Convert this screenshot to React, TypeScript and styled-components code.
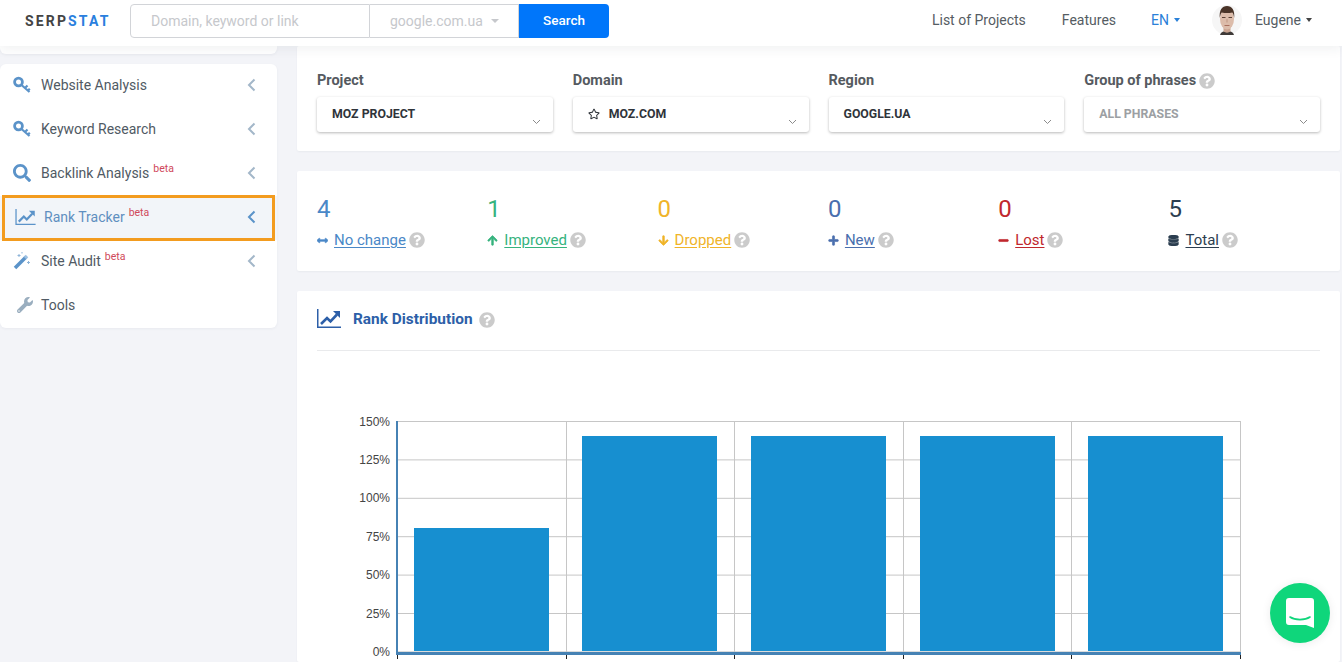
import React from "react";
import styled, { createGlobalStyle } from "styled-components";
import {
  FaArrowDown,
  FaArrowUp,
  FaArrowsAltH,
  FaDatabase,
  FaMinus,
  FaPlus,
  FaQuestionCircle,
  FaRegStar,
  FaSearch,
  FaWrench,
} from "react-icons/fa";

const GlobalStyle = createGlobalStyle`
  html, body {
    margin: 0;
    height: 100%;
    overflow: hidden;
    background: #f3f4f8;
    font-family: Roboto, "Liberation Sans", sans-serif;
  }
  * { box-sizing: border-box; }
`;

const Page = styled.div`
  width: 1342px;
  height: 662px;
  overflow: hidden;
  display: flex;
  flex-direction: column;
`;

const Header = styled.header`
  position: relative;
  z-index: 2;
  flex: none;
  height: 46px;
  padding: 0 29px 4px 25px;
  display: flex;
  align-items: center;
  background: #fff;
  box-shadow: 0 2px 12px rgba(40, 50, 70, 0.08);
`;

const Logo = styled.div`
  width: 105px;
  font-size: 14px;
  font-weight: 700;
  letter-spacing: 2.15px;
  color: #444;

  span {
    color: #2a7fde;
  }
`;

const SearchBox = styled.div`
  display: flex;
  height: 34px;
`;

const SearchInput = styled.div`
  width: 240px;
  padding-left: 20px;
  display: flex;
  align-items: center;
  font-size: 14px;
  color: #c6c8cc;
  border: 1px solid #d2d4d8;
  border-radius: 4px 0 0 4px;
`;

const SearchRegion = styled.div`
  width: 149px;
  padding-left: 20px;
  display: flex;
  align-items: center;
  gap: 8px;
  font-size: 14px;
  color: #c6c8cc;
  border: 1px solid #d2d4d8;
  border-left: 0;
`;

const Caret = styled.i<{ $color: string; $size?: number }>`
  display: inline-block;
  width: 0;
  height: 0;
  border-left: ${(p) => p.$size ?? 3.5}px solid transparent;
  border-right: ${(p) => p.$size ?? 3.5}px solid transparent;
  border-top: 4px solid ${(p) => p.$color};
`;

const SearchButton = styled.div`
  width: 90px;
  padding-bottom: 3px;
  display: flex;
  align-items: center;
  justify-content: center;
  font-size: 13.5px;
  font-weight: 500;
  color: #fff;
  background: #0076fa;
  border-radius: 0 4px 4px 0;
`;

const HeaderNav = styled.nav`
  margin-left: auto;
  padding-bottom: 2px;
  display: flex;
  align-items: center;
  font-size: 14px;
  color: #555c63;
`;

const NavLink = styled.span`
  margin-right: 36px;
`;

const Lang = styled.span`
  margin-right: 32px;
  margin-left: -1px;
  display: flex;
  align-items: center;
  gap: 5px;
  color: #2a80d8;
`;

const User = styled.span`
  display: flex;
  align-items: center;
  gap: 13px;
  margin-right: 1px;
`;

const UserName = styled.span`
  display: flex;
  align-items: center;
  gap: 5px;
`;

const Body = styled.div`
  flex: 1;
  min-height: 0;
  display: flex;
  gap: 20px;
`;

const Sidebar = styled.aside`
  flex: none;
  width: 277px;
  display: flex;
  flex-direction: column;
  gap: 10px;
`;

const SideStub = styled.div`
  height: 8px;
  background: #fff;
  border-radius: 0 0 6px 6px;
  box-shadow: 0 1px 3px rgba(40, 50, 70, 0.05);
`;

const SideCard = styled.div`
  background: #fff;
  border-radius: 6px;
  box-shadow: 0 1px 3px rgba(40, 50, 70, 0.05);
`;

const SideItem = styled.div<{ $active?: boolean }>`
  position: relative;
  height: 44px;
  padding: 0 21px 2px ${(p) => (p.$active ? 15 : 13)}px;
  display: flex;
  align-items: center;
  font-size: 14px;
  color: ${(p) => (p.$active ? "#5f8fc0" : "#505a64")};
  background: ${(p) => (p.$active ? "#f2f5f9" : "transparent")};

  ${(p) =>
    p.$active &&
    `&::after {
      content: "";
      position: absolute;
      inset: -1px 2px -1px 2px;
      border: 3px solid #f39c1f;
    }`}
`;

const SideIcon = styled.span<{ $active?: boolean; $muted?: boolean }>`
  flex: none;
  width: ${(p) => (p.$active ? 29 : 28)}px;
  padding-left: ${(p) => (p.$muted ? 4 : 0)}px;
  display: flex;
  align-items: center;
  color: ${(p) => (p.$muted ? "#9aaebf" : "#5b93c9")};
`;

const Beta = styled.sup`
  margin-left: 4px;
  margin-top: -7px;
  font-size: 10.5px;
  line-height: 1;
  color: #d0485a;
`;

const Chevron = styled.svg<{ $active?: boolean }>`
  margin-left: auto;
  color: ${(p) => (p.$active ? "#5b93c9" : "#a3b7c9")};
`;

const Main = styled.main`
  width: 1043px;
  display: flex;
  flex-direction: column;
  gap: 20px;
`;

const Card = styled.section`
  background: #fff;
  border-radius: 2px;
  box-shadow: 0 1px 2px rgba(40, 50, 70, 0.05);
`;

const FilterCard = styled(Card)`
  height: 105px;
  padding: 25px 20px 0;
  display: grid;
  grid-template-columns: repeat(4, 1fr);
  column-gap: 20px;
`;

const FilterLabel = styled.div`
  height: 26px;
  padding-top: 1px;
  display: flex;
  align-items: flex-start;
  gap: 3px;
  font-size: 14.5px;
  font-weight: 700;
  line-height: 18px;
  color: #555a60;

  svg {
    margin-top: 1px;
  }
`;

const HelpIcon = styled(FaQuestionCircle)<{ $size?: number }>`
  flex: none;
  width: ${(p) => p.$size ?? 16}px;
  height: ${(p) => p.$size ?? 16}px;
  color: #cbcbcb;
`;

const Select = styled.div<{ $muted?: boolean }>`
  position: relative;
  height: 35px;
  padding: 0 15px 1px;
  display: flex;
  align-items: center;
  gap: 9px;
  font-size: 12.3px;
  font-weight: 700;
  color: ${(p) => (p.$muted ? "#9c9fa3" : "#2f343a")};
  background: #fff;
  border-radius: 3px;
  box-shadow: 0 1px 3px rgba(0, 0, 0, 0.28);
`;

const SelectArrow = styled.svg`
  position: absolute;
  right: 12px;
  bottom: 7px;
  width: 9px;
  height: 6px;
`;

const StatsCard = styled(Card)`
  height: 100px;
  padding: 24px 0 0 20px;
  display: grid;
  grid-template-columns: repeat(6, 170.3px);
`;

const StatValue = styled.div<{ $color: string }>`
  height: 30px;
  font-size: 24px;
  line-height: 28px;
  color: ${(p) => p.$color};
`;

const StatLabel = styled.div<{ $color: string }>`
  margin-top: 6px;
  display: flex;
  align-items: center;
  font-size: 15px;
  color: ${(p) => p.$color};

  svg:first-child {
    width: 11px;
    height: 11px;
    margin-right: 6px;
    stroke: currentColor;
    stroke-width: 30;
  }

  u {
    margin-right: 3px;
    text-underline-offset: 2px;
  }
`;

const ChartCard = styled(Card)`
  flex: 1;
  min-height: 0;
  padding: 0 20px;
  overflow: hidden;
`;

const ChartTitle = styled.div`
  height: 60px;
  padding-bottom: 4px;
  display: flex;
  align-items: center;
  border-bottom: 1px solid #e9eaec;
  font-size: 15.4px;
  font-weight: 700;
  color: #2d5fa8;

  & > svg:first-child {
    margin-right: 12px;
  }

  & > svg:last-child {
    margin-top: 3px;
  }

  span {
    margin-right: 6px;
  }
`;

const ChartWrap = styled.div`
  margin-top: 60px;
`;

const ChatButton = styled.div`
  position: fixed;
  left: 1270px;
  top: 583px;
  width: 60px;
  height: 60px;
  display: flex;
  align-items: center;
  justify-content: center;
  border-radius: 50%;
  background: #0fd67b;
  box-shadow: 0 1px 10px rgba(0, 0, 0, 0.08);
`;

const Help = ({ size }: { size?: number }) => <HelpIcon $size={size} />;

const KeyIcon = () => (
  <svg width="18" height="18" viewBox="0 0 18 18">
    <circle cx="5.500" cy="6" r="3.900" fill="none" stroke="currentColor" strokeWidth="2.800" />
    <path
      d="M8.500 9l8 7M12 12l2.500-2.500M15 14.500l1.800-1.800"
      fill="none"
      stroke="currentColor"
      strokeWidth="2.200"
    />
  </svg>
);

const TrendIcon = ({ width, height }: { width: number; height: number }) => (
  <svg width={width} height={height} viewBox="0 0 24 19">
    <path d="M.75 0v18.250H24" fill="none" stroke="currentColor" strokeWidth="1.500" />
    <path d="M4 15l6-6 3.500 3.500L20 5.500" fill="none" stroke="currentColor" strokeWidth="2.600" />
    <path d="M16 2h7v7z" fill="currentColor" />
  </svg>
);

const WandIcon = () => (
  <svg width="18" height="18" viewBox="0 0 18 18">
    <path d="M2 16L13 5" stroke="currentColor" strokeWidth="3.600" />
    <path d="M12 6l2-2" stroke="#9cc0e2" strokeWidth="3.600" />
    <path
      d="M6 2v3M4.500 3.500h3M15.500 9v3M14 10.500h3M9 0v1.500"
      stroke="#8fb5d9"
      strokeWidth="1"
    />
  </svg>
);

const sideItems = [
  { title: "Website Analysis", icon: <KeyIcon />, arrow: true },
  { title: "Keyword Research", icon: <KeyIcon />, arrow: true },
  { title: "Backlink Analysis", icon: <FaSearch size={18} />, beta: true, arrow: true },
  { title: "Rank Tracker", icon: <TrendIcon width={21} height={16} />, beta: true, arrow: true, active: true },
  { title: "Site Audit", icon: <WandIcon />, beta: true, arrow: true },
  { title: "Tools", icon: <FaWrench size={16} />, muted: true },
];

const filters = [
  { label: "Project", value: "MOZ PROJECT" },
  { label: "Domain", value: "MOZ.COM", star: true },
  { label: "Region", value: "GOOGLE.UA" },
  { label: "Group of phrases", value: "ALL PHRASES", help: true, muted: true },
];

const stats = [
  { value: 4, label: "No change", color: "#4a88c7", icon: <FaArrowsAltH /> },
  { value: 1, label: "Improved", color: "#36b37e", icon: <FaArrowUp /> },
  { value: 0, label: "Dropped", color: "#f0b429", icon: <FaArrowDown /> },
  { value: 0, label: "New", color: "#4a6fae", icon: <FaPlus /> },
  { value: 0, label: "Lost", color: "#c0272d", icon: <FaMinus /> },
  { value: 5, label: "Total", color: "#2c3e50", icon: <FaDatabase /> },
];

const yTicks = ["150%", "125%", "100%", "75%", "50%", "25%", "0%"];
const xLines = [80, 249, 417, 586, 754, 923];
const bars = [
  { x: 97, top: 117 },
  { x: 265, top: 25 },
  { x: 434, top: 25 },
  { x: 603, top: 25 },
  { x: 771, top: 25 },
];

// top gridline sits 10px below the svg's top so the 150% label has room
const RankChart = () => (
  <svg width="1003" height="262" viewBox="0 0 1003 262" style={{ display: "block" }}>
    {yTicks.map((t, i) => {
      const y = 10.5 + i * 38.4;
      return (
        <g key={t}>
          <line x1="80" x2="923" y1={y} y2={y} stroke="#c6c6c6" />
          <text
            x="73"
            y={y + 4}
            textAnchor="end"
            fontSize="12"
            fontFamily="'Liberation Sans', sans-serif"
            fill="#444"
          >
            {t}
          </text>
        </g>
      );
    })}
    {xLines.map((x) => (
      <line key={x} x1={x + 0.5} x2={x + 0.5} y1="10" y2="241" stroke="#c6c6c6" />
    ))}
    {bars.map((b) => (
      <rect key={b.x} x={b.x} y={b.top} width="135" height={240 - b.top} fill="#178fd0" />
    ))}
    <rect x="79" y="10" width="2" height="232" fill="#4682b4" />
    <rect x="79" y="241" width="845" height="3" fill="#4682b4" />
    {xLines.map((x) => (
      <line key={x} x1={x + 0.5} x2={x + 0.5} y1="244" y2="248" stroke="#222" />
    ))}
  </svg>
);

const Avatar = () => (
  <svg width="30" height="30" viewBox="0 0 30 30">
    <circle cx="15" cy="15" r="15" fill="#f6f6f6" />
    <path d="M8 30c1-3 3-4 7-4s6 1 7 4a15 15 0 0 1-14 0z" fill="#3f3a38" />
    <path d="M11.500 21h7v5.500c-2 1.500-5 1.500-7 0z" fill="#c9a390" />
    <ellipse cx="15" cy="14" rx="7" ry="10.500" fill="#dcbcaa" />
    <path
      d="M7.800 13C7 5 10 1 15 1s8 4 7.200 12c-.5-3-1-4.500-2-5.500-3 .8-7.400.8-10.400 0-1 1-1.500 2.500-2 5.500z"
      fill="#4a3428"
    />
    <path d="M10 12.500h3.500M16.500 12.500H20" stroke="#5c4236" strokeWidth="1" />
    <path d="M15 14v3.500" stroke="#bf9682" strokeWidth="1" />
    <path d="M12.500 20.500h5" stroke="#a9705f" strokeWidth="1" />
  </svg>
);

const App = () => (
  <Page>
    <GlobalStyle />
    <Header>
      <Logo>
        SERP<span>STAT</span>
      </Logo>
      <SearchBox>
        <SearchInput>Domain, keyword or link</SearchInput>
        <SearchRegion>
          google.com.ua <Caret $color="#c6c8cc" $size={4} />
        </SearchRegion>
        <SearchButton>Search</SearchButton>
      </SearchBox>
      <HeaderNav>
        <NavLink>List of Projects</NavLink>
        <NavLink>Features</NavLink>
        <Lang>
          EN <Caret $color="#2a80d8" />
        </Lang>
        <User>
          <Avatar />
          <UserName>
            Eugene <Caret $color="#444" />
          </UserName>
        </User>
      </HeaderNav>
    </Header>
    <Body>
      <Sidebar>
        <SideStub />
        <SideCard>
          {sideItems.map((item) => (
            <SideItem key={item.title} $active={item.active}>
              <SideIcon $active={item.active} $muted={item.muted}>
                {item.icon}
              </SideIcon>
              {item.title}
              {item.beta ? <Beta>beta</Beta> : null}
              {item.arrow ? (
                <Chevron $active={item.active} width="9" height="14" viewBox="0 0 9 14">
                  <path d="M7.500 1.500L2 7l5.500 5.500" fill="none" stroke="currentColor" strokeWidth="2" />
                </Chevron>
              ) : null}
            </SideItem>
          ))}
        </SideCard>
      </Sidebar>
      <Main>
        <FilterCard>
          {filters.map((f) => (
            <div key={f.label}>
              <FilterLabel>
                {f.label}
                {f.help ? <Help /> : null}
              </FilterLabel>
              <Select $muted={f.muted}>
                {f.star ? <FaRegStar size={12} /> : null}
                {f.value}
                <SelectArrow viewBox="0 0 9 6">
                  <path d="M1 1l3.500 3.500L8 1" fill="none" stroke="#8b8b8b" />
                </SelectArrow>
              </Select>
            </div>
          ))}
        </FilterCard>
        <StatsCard>
          {stats.map((s) => (
            <div key={s.label}>
              <StatValue $color={s.color}>{s.value}</StatValue>
              <StatLabel $color={s.color}>
                {s.icon}
                <u>{s.label}</u>
                <Help />
              </StatLabel>
            </div>
          ))}
        </StatsCard>
        <ChartCard>
          <ChartTitle>
            <TrendIcon width={24} height={19} />
            <span>Rank Distribution</span>
            <Help size={16} />
          </ChartTitle>
          <ChartWrap>
            <RankChart />
          </ChartWrap>
        </ChartCard>
      </Main>
    </Body>
    <ChatButton>
      <svg width="28" height="32" viewBox="0 0 28 32">
        <path
          d="M3 1h22a3 3 0 0 1 3 3v27l-8-3H3a3 3 0 0 1-3-3V4a3 3 0 0 1 3-3z"
          fill="#fff"
        />
        <path d="M4 20c5 3.500 15 3.500 20 0" fill="none" stroke="#0fd67b" strokeWidth="1.600" strokeLinecap="round" />
      </svg>
    </ChatButton>
  </Page>
);

export default App;
